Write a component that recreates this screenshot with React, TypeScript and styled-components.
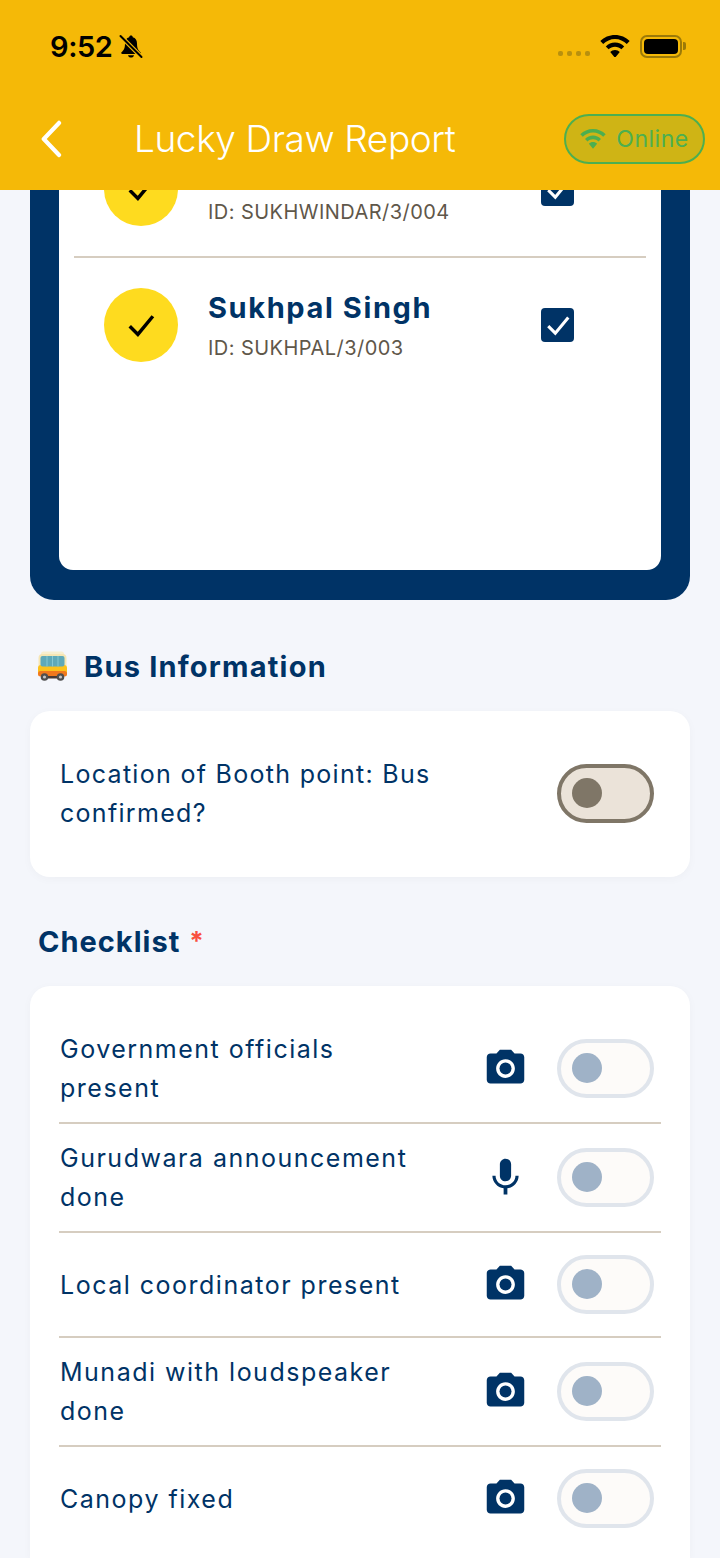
import * as React from 'react'
import styled, { createGlobalStyle } from 'styled-components'
import { MdMic, MdPhotoCamera } from 'react-icons/md'

const navy = '#003366'

const GlobalStyle = createGlobalStyle`
  html, body {
    margin: 0;
    padding: 0;
    background: #f4f6fb;
    font-family: Inter, "Liberation Sans", sans-serif;
  }
`

// first row is scrolled under the header, its name can't be read
const attendees = [
    { name: '', id: 'ID: SUKHWINDAR/3/004' },
    { name: 'Sukhpal Singh', id: 'ID: SUKHPAL/3/003' },
]

const checklist = [
    { label: 'Government officials present', icon: 'camera' },
    { label: 'Gurudwara announcement done', icon: 'mic' },
    { label: 'Local coordinator present', icon: 'camera' },
    { label: 'Munadi with loudspeaker done', icon: 'camera' },
    { label: 'Canopy fixed', icon: 'camera' },
]

const WifiIcon = ({ size, color }: { size: number; color: string }) => (
    <svg width={size} height={size * 0.76} viewBox="0 0 30 23" fill={color}>
        <path d="M15 0C9.2 0 4 2.3 0.2 6.1l2.9 3C6.2 6 10.4 4 15 4s8.8 2 11.9 5.1l2.9-3C26 2.3 20.8 0 15 0z" />
        <path d="M15 7.6c-3.6 0-6.9 1.5-9.3 3.9l2.9 3c1.6-1.7 3.9-2.7 6.4-2.7s4.8 1 6.4 2.7l2.9-3c-2.4-2.4-5.7-3.9-9.3-3.9z" />
        <path d="M15 15.2c-1.9 0-3.6 0.8-4.8 2L15 23l4.8-5.8c-1.2-1.2-2.9-2-4.8-2z" />
    </svg>
)

const BellOffIcon = () => (
    <svg width="24" height="25" viewBox="0 0 24 25">
        <path
            fill="#000"
            d="M12 1.5c-1 0-1.7.7-1.8 1.7C7.4 4 6 6.300 6 9.500c0 4.500-1 6.500-3.500 8.800-.6.600-.2 1.700.8 1.700h17.400c1 0 1.400-1.100.8-1.700C19 16 18 14 18 9.500c0-3.200-1.400-5.500-4.200-6.300-.1-1-.8-1.700-1.800-1.700z"
        />
        <path fill="#000" d="M9 21.200h6c-.3 1.400-1.500 2.300-3 2.300s-2.700-.9-3-2.300z" />
        <path stroke="#f5b907" strokeWidth="4.500" d="M2 2.500l20 20" />
        <path stroke="#000" strokeWidth="2" strokeLinecap="round" d="M1.500 2l21 21" />
    </svg>
)

const BackIcon = () => (
    <svg width="24" height="38" viewBox="0 0 24 38" fill="none">
        <path d="M20 3L4 19l16 16" stroke="#fff" strokeWidth="4.500" strokeLinecap="round" strokeLinejoin="round" transform="translate(1 0) scale(0.95 1)" />
    </svg>
)

const TickIcon = ({ color, size }: { color: string; size: number }) => (
    <svg width={size} height={size} viewBox="0 0 24 24" fill="none">
        <path d="M3 13l6.500 6.500L21.500 5" stroke={color} strokeWidth="2.800" />
    </svg>
)

const BusEmoji = () => (
    <svg width="33" height="30" viewBox="0 0 33 30">
        <rect x="5" y="0.500" width="23" height="6" rx="2.500" fill="#f8efcf" />
        <rect x="2.500" y="3" width="28" height="20" rx="4" fill="#f6e6b4" />
        <rect x="2" y="14" width="29" height="11" rx="3" fill="#fcc21b" />
        <rect x="2" y="20" width="29" height="5.500" rx="2.500" fill="#f0781e" />
        <rect x="4.500" y="5" width="24" height="10.500" rx="2" fill="#5fa9b8" />
        <path d="M11 5v10.500M16.500 5v10.500M22 5v10.500" stroke="#86c8d2" strokeWidth="1" />
        <rect x="6" y="25" width="21" height="2.500" fill="#4a3a34" />
        <circle cx="8.500" cy="26" r="3.800" fill="#4f4f4f" />
        <circle cx="8.500" cy="26" r="1.600" fill="#c4c4c4" />
        <circle cx="24.500" cy="26" r="3.800" fill="#4f4f4f" />
        <circle cx="24.500" cy="26" r="1.600" fill="#c4c4c4" />
    </svg>
)

export default function App() {
    return (
        <Screen>
            <GlobalStyle />
            <Header>
                <StatusBar>
                    <StatusLeft>
                        <Clock>9:52</Clock>
                        <BellOffIcon />
                    </StatusLeft>
                    <StatusRight>
                        <SignalDots>
                            <i /><i /><i /><i />
                        </SignalDots>
                        <WifiIcon size={30} color="#000" />
                        <Battery>
                            <BatteryFill />
                            <BatteryTip />
                        </Battery>
                    </StatusRight>
                </StatusBar>
                <NavBar>
                    <BackButton><BackIcon /></BackButton>
                    <Title>Lucky Draw Report</Title>
                    <OnlinePill>
                        <WifiIcon size={26} color="#4caf50" />
                        <span>Online</span>
                    </OnlinePill>
                </NavBar>
            </Header>
            <ScrollArea>
                <AttendeeCard>
                    <AttendeePanel>
                        {attendees.map((a) => (
                            <AttendeeRow key={a.id}>
                                <TickCircle><TickIcon color="#000" size={30} /></TickCircle>
                                <AttendeeText>
                                    <AttendeeName>{a.name}</AttendeeName>
                                    <AttendeeId>{a.id}</AttendeeId>
                                </AttendeeText>
                                <CheckBox><TickIcon color="#fff" size={26} /></CheckBox>
                            </AttendeeRow>
                        ))}
                    </AttendeePanel>
                </AttendeeCard>

                <BusHeading>
                    <BusEmoji />
                    <span>Bus Information</span>
                </BusHeading>
                <BusCard>
                    <BusLabel>Location of Booth point: Bus confirmed?</BusLabel>
                    <Toggle $tone="warm"><Knob $tone="warm" /></Toggle>
                </BusCard>

                <ChecklistHeading>Checklist <Required>*</Required></ChecklistHeading>
                <ChecklistCard>
                    {checklist.map((item) => (
                        <ChecklistRow key={item.label}>
                            <RowLabel>{item.label}</RowLabel>
                            <IconSlot>
                                {item.icon === 'mic' ? <MdMic size={45} /> : <MdPhotoCamera size={45} />}
                            </IconSlot>
                            <Toggle $tone="cool"><Knob $tone="cool" /></Toggle>
                        </ChecklistRow>
                    ))}
                </ChecklistCard>
            </ScrollArea>
        </Screen>
    )
}

const Screen = styled.div`
  width: 720px;
  height: 1558px;
  display: flex;
  flex-direction: column;
  overflow: hidden;
  background: #f4f6fb;
`

const Header = styled.header`
  flex: 0 0 190px;
  display: flex;
  flex-direction: column;
  background: #f5b907;
`

const StatusBar = styled.div`
  height: 92px;
  display: flex;
  justify-content: space-between;
  align-items: center;
  padding: 0 38px 0 50px;
`

const StatusLeft = styled.div`
  display: flex;
  align-items: center;
  gap: 6px;
`

const Clock = styled.span`
  font-size: 29px;
  font-weight: 600;
  letter-spacing: -0.4px;
  color: #000;
`

const StatusRight = styled.div`
  display: flex;
  align-items: center;
  gap: 10px;
`

const SignalDots = styled.div`
  display: flex;
  gap: 4px;
  margin-top: 14px;

  i {
    width: 5px;
    height: 5px;
    border-radius: 2px;
    background: #b8900e;
  }
`

const Battery = styled.div`
  position: relative;
  box-sizing: border-box;
  width: 42px;
  height: 23px;
  padding: 2px;
  border: 2px solid #9c7a08;
  border-radius: 7px;
`

const BatteryFill = styled.div`
  height: 100%;
  background: #000;
  border-radius: 4px;
`

const BatteryTip = styled.div`
  position: absolute;
  right: -6px;
  top: 5px;
  width: 3px;
  height: 8px;
  border-radius: 0 2px 2px 0;
  background: #9c7a08;
`

const NavBar = styled.div`
  height: 94px;
  display: flex;
  align-items: center;
  padding: 0 15px 0 39px;
`

const BackButton = styled.div`
  width: 95px;
  display: flex;
  align-items: center;
`

const Title = styled.div`
  flex: 1;
  font-size: 37px;
  font-weight: 300;
  letter-spacing: -0.4px;
  line-height: 44px;
  color: #fff;
  white-space: nowrap;
`

const OnlinePill = styled.div`
  box-sizing: border-box;
  width: 141px;
  height: 50px;
  display: flex;
  align-items: center;
  justify-content: center;
  gap: 10px;
  border: 2px solid #4caf50;
  border-radius: 25px;
  background: #cfb415;
  color: #4caf50;
  font-size: 23px;
  letter-spacing: 0.5px;
`

const ScrollArea = styled.main`
  flex: 1;
  min-height: 0;
  overflow: hidden;
  display: flex;
  flex-direction: column;
`

const AttendeeCard = styled.section`
  flex: none;
  margin: -120px 30px 0;
  padding: 30px 29px;
  background: ${navy};
  border-radius: 24px;
`

const AttendeePanel = styled.div`
  box-sizing: border-box;
  height: 470px;
  padding: 22px 15px 0;
  background: #fff;
  border-radius: 14px;
`

const AttendeeRow = styled.div`
  height: 134px;
  display: flex;
  align-items: center;
  padding: 0 72px 0 30px;

  & + & {
    border-top: 2px solid #d6cdc0;
  }
`

const TickCircle = styled.div`
  flex: none;
  width: 74px;
  height: 74px;
  display: flex;
  align-items: center;
  justify-content: center;
  border-radius: 50%;
  background: #fedb1f;
`

const AttendeeText = styled.div`
  flex: 1;
  margin-left: 30px;
`

const AttendeeName = styled.div`
  min-height: 38px;
  font-size: 29px;
  font-weight: 700;
  letter-spacing: 1.600px;
  line-height: 38px;
  color: ${navy};
`

const AttendeeId = styled.div`
  margin-top: 8px;
  font-size: 20px;
  letter-spacing: 0.450px;
  line-height: 26px;
  color: #5f574a;
`

const CheckBox = styled.div`
  flex: none;
  width: 33px;
  height: 34px;
  display: flex;
  align-items: center;
  justify-content: center;
  border-radius: 4px;
  background: ${navy};
`

const BusHeading = styled.h2`
  flex: none;
  display: flex;
  align-items: center;
  gap: 15px;
  margin: 46px 0 25px 36px;
  height: 40px;
  font-size: 29px;
  font-weight: 700;
  letter-spacing: 1.200px;
  color: ${navy};
`

const CardBase = styled.section`
  flex: none;
  margin: 0 30px;
  background: #fff;
  border-radius: 20px;
  box-shadow: 0 2px 10px rgba(0, 0, 0, 0.03);
`

const BusCard = styled(CardBase)`
  box-sizing: border-box;
  height: 166px;
  display: flex;
  align-items: center;
  padding: 0 36px 0 30px;
`

const RowLabel = styled.div`
  flex: 1;
  max-width: 375px;
  font-size: 25px;
  line-height: 39px;
  letter-spacing: 1.500px;
  color: ${navy};
`

const BusLabel = styled(RowLabel)`
  letter-spacing: 1.300px;
`

const Toggle = styled.div<{ $tone: 'warm' | 'cool' }>`
  flex: none;
  box-sizing: border-box;
  width: 97px;
  height: 59px;
  margin-left: auto;
  margin-bottom: 2px;
  display: flex;
  align-items: center;
  padding-left: 11px;
  border-radius: 30px;
  border: 4px solid ${(p) => (p.$tone === 'warm' ? '#7f7667' : '#e0e5ec')};
  background: ${(p) => (p.$tone === 'warm' ? '#ebe3d9' : '#fdfbf9')};
`

const Knob = styled.div<{ $tone: 'warm' | 'cool' }>`
  width: 30px;
  height: 30px;
  border-radius: 50%;
  background: ${(p) => (p.$tone === 'warm' ? '#7f7667' : '#9fb2c7')};
`

const ChecklistHeading = styled.h2`
  flex: none;
  margin: 44px 0 25px 38px;
  height: 40px;
  line-height: 40px;
  font-size: 29px;
  font-weight: 700;
  letter-spacing: 1px;
  color: ${navy};
`

const Required = styled.span`
  color: #f9503e;
  font-size: 26px;
  margin-left: 1px;
  vertical-align: 2px;
`

const ChecklistCard = styled(CardBase)`
  flex: 1;
  padding: 29px 29px 0;
  border-radius: 20px 20px 0 0;
`

const ChecklistRow = styled.div`
  box-sizing: border-box;
  min-height: 105px;
  display: flex;
  align-items: center;
  padding: 15px 7px 14px 1px;
  border-bottom: 2px solid #d6cdc0;

  &:last-child {
    min-height: 103px;
    border-bottom: none;
  }
`

const IconSlot = styled.div`
  flex: none;
  width: 45px;
  height: 45px;
  margin-left: auto;
  margin-bottom: 2px;
  color: ${navy};

  & + div {
    margin-left: 29px;
  }
`
